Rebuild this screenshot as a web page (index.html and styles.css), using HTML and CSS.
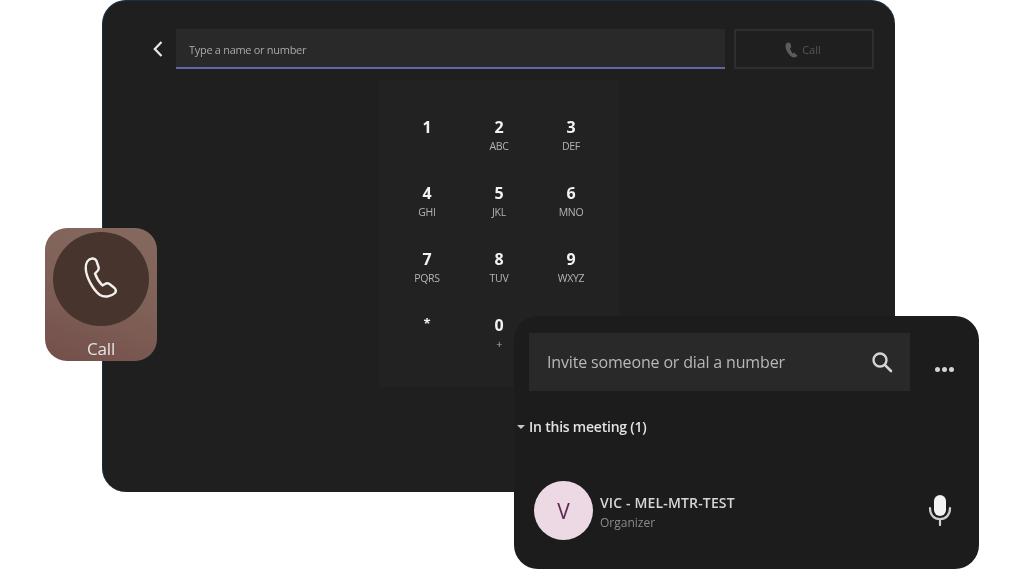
FILE: index.html
```html
<!DOCTYPE html>
<html lang="en">
<head>
    <meta charset="UTF-8">
    <title>Dial pad and participants</title>
    <link rel="stylesheet" href="styles.css">
</head>
<body>
    <div class="dial-window">
        <div class="dial-header">
            <span class="back">
                <svg width="12" height="18" viewBox="0 0 12 18"><path d="M9.500 2 L2.800 9 L9.500 16" fill="none" stroke="#e8e8e8" stroke-width="2.200"/></svg>
            </span>
            <div class="number-input">Type a name or number</div>
            <div class="call-button">
                <svg width="13" height="16" viewBox="0 0 13 16"><path d="M3 .5 C1.200 1 .3 2.500 .5 4.800 C.9 8.500 3.800 13 7 15 C9 15.800 11.500 15.300 12.500 13.800 L9.500 10.800 L7.800 11.500 C6.500 10 5.500 8 5 6.200 L6.400 5 L5.200 1 Z" fill="#5c5c5c"/></svg>
                <span>Call</span>
            </div>
        </div>
        <div class="dial-pad">
            <div class="key"><span class="digit">1</span></div>
            <div class="key"><span class="digit">2</span><span class="letters">ABC</span></div>
            <div class="key"><span class="digit">3</span><span class="letters">DEF</span></div>
            <div class="key"><span class="digit">4</span><span class="letters">GHI</span></div>
            <div class="key"><span class="digit">5</span><span class="letters">JKL</span></div>
            <div class="key"><span class="digit">6</span><span class="letters">MNO</span></div>
            <div class="key"><span class="digit">7</span><span class="letters">PQRS</span></div>
            <div class="key"><span class="digit">8</span><span class="letters">TUV</span></div>
            <div class="key"><span class="digit">9</span><span class="letters">WXYZ</span></div>
            <div class="key"><span class="digit star">*</span></div>
            <div class="key"><span class="digit">0</span><span class="letters">+</span></div>
            <div class="key"></div>
        </div>
    </div>

    <div class="call-tile">
        <div class="call-circle">
            <svg width="33" height="43" viewBox="0 0 33 43"><path d="M8 2.500 C4 3 1.500 7 1.800 13 C2.200 21 9 34 16 39 C20 41.500 27 41 31 37 C32 35.500 32 33.500 30.500 32 L25.500 28 C24 27 22.500 27 21 28 L18.500 29.500 C15 26 12.500 22 11 17.500 L13.500 15 C14.500 14 15 12.500 14.500 11 L12.500 5 C12 3.500 10 2.200 8 2.500 Z" fill="none" stroke="#f4f0ee" stroke-width="2.400" stroke-linejoin="round"/></svg>
        </div>
        <span class="call-label">Call</span>
    </div>

    <div class="people-panel">
        <div class="search-row">
            <div class="search-box">
                <span>Invite someone or dial a number</span>
                <svg width="22" height="22" viewBox="0 0 22 22"><circle cx="9" cy="9" r="6.500" fill="none" stroke="#d4d4d4" stroke-width="2.400"/><path d="M13.800 13.800 L20 20" stroke="#d4d4d4" stroke-width="2.600" stroke-linecap="round"/></svg>
            </div>
            <div class="more"><i></i><i></i><i></i></div>
        </div>
        <div class="section-title"><span class="caret"></span>In this meeting (1)</div>
        <div class="person">
            <div class="avatar">V</div>
            <div class="person-text">
                <div class="person-name">VIC - MEL-MTR-TEST</div>
                <div class="person-role">Organizer</div>
            </div>
            <svg class="mic" width="24" height="32" viewBox="0 0 24 32"><rect x="6" y="1" width="12" height="21" rx="6" fill="#f2f2f2"/><path d="M2 14 C2 21 6 25 12 25 C18 25 22 21 22 14 M12 25 V31" fill="none" stroke="#cfcfcf" stroke-width="2.200" stroke-linecap="round"/></svg>
        </div>
    </div>
</body>
</html>
```

FILE: styles.css
```css
body {
    margin: 0;
    width: 1024px;
    height: 569px;
    overflow: hidden;
    position: relative;
    background-color: #fff;
    font-family: "Open Sans", "Noto Sans", Arial, sans-serif;
}
.dial-window {
    position: absolute;
    left: 102px;
    top: 0;
    width: 793px;
    height: 492px;
    box-sizing: border-box;
    padding-top: 29px;
    display: flex;
    flex-direction: column;
    background-color: #1f1f1f;
    border-radius: 24px;
    border-top: 1px solid #14304a;
    border-left: 1px solid #14304a;
}
.dial-header {
    display: flex;
    height: 40px;
    margin-top: -1px;
    padding: 0 21px 0 40px;
}
.back {
    width: 30px;
    margin-right: 3px;
    display: flex;
    align-items: center;
    justify-content: center;
}
.number-input {
    flex: 1;
    display: flex;
    align-items: center;
    padding: 2px 0 0 13px;
    box-sizing: border-box;
    background-color: #292929;
    border-bottom: 2px solid #6264a7;
    color: #a8a8a8;
    font-size: 11px;
    letter-spacing: -0.3px;
    filter: blur(0.5px);
}
.call-button {
    width: 140px;
    margin-left: 9px;
    padding-top: 1px;
    box-sizing: border-box;
    display: flex;
    align-items: center;
    justify-content: center;
    gap: 4px;
    border: 2px solid #2e2e2e;
    color: #565656;
    font-size: 11px;
    filter: blur(0.5px);
}
.call-button svg {
    margin-left: -2px;
}
.dial-pad {
    align-self: center;
    width: 240px;
    height: 307px;
    margin-top: 11px;
    box-sizing: border-box;
    padding: 37px 12px 0;
    display: grid;
    grid-template-columns: repeat(3, 72px);
    grid-auto-rows: 66px;
    background-color: #222;
    filter: blur(0.4px);
}
.key {
    display: flex;
    flex-direction: column;
    align-items: center;
}
.digit {
    height: 20px;
    line-height: 20px;
    color: #f2f2f2;
    font-size: 16px;
    font-weight: 700;
}
.star {
    font-size: 13px;
    line-height: 16px;
}
.letters {
    margin-top: 2px;
    line-height: 14px;
    color: #b4b4b4;
    font-size: 10.5px;
    letter-spacing: -0.3px;
}
.call-tile {
    position: absolute;
    left: 45px;
    top: 228px;
    width: 112px;
    height: 133px;
    box-sizing: border-box;
    padding-top: 4px;
    display: flex;
    flex-direction: column;
    align-items: center;
    border-radius: 22px;
    background: linear-gradient(20deg, #744f4b 0%, #7f6157 50%, #86695e 100%);
}
.call-circle {
    width: 96px;
    height: 96px;
    display: flex;
    align-items: center;
    justify-content: center;
    border-radius: 50%;
    background-color: #47352d;
}
.call-circle svg {
    margin: -3px 2px 0 0;
}
.call-label {
    margin-top: 11px;
    line-height: 24px;
    color: #e6e3e2;
    font-size: 17px;
    letter-spacing: -0.2px;
    filter: blur(0.3px);
}
.people-panel {
    position: absolute;
    left: 514px;
    top: 316px;
    width: 465px;
    height: 253px;
    box-sizing: border-box;
    padding: 17px 15px 0;
    background-color: #1c1c1c;
    border-radius: 24px;
}
.search-row {
    display: flex;
}
.search-box {
    width: 381px;
    height: 58px;
    box-sizing: border-box;
    padding: 0 17px 0 18px;
    display: flex;
    align-items: center;
    justify-content: space-between;
    background-color: #292929;
    color: #b8b8b8;
    font-size: 16px;
    letter-spacing: -0.16px;
}
.search-box span {
    filter: blur(0.4px);
}
.more {
    display: flex;
    gap: 2px;
    margin: 34px 0 0 25px;
}
.more i {
    width: 5px;
    height: 5px;
    border-radius: 50%;
    background-color: #d4d4d4;
}
.section-title {
    margin-top: 26px;
    height: 20px;
    line-height: 20px;
    position: relative;
    color: #e2e2e2;
    font-size: 14px;
    font-weight: 600;
    letter-spacing: -0.22px;
    filter: blur(0.4px);
}
.caret {
    position: absolute;
    left: -12px;
    top: 8px;
    border-left: 4px solid transparent;
    border-right: 4px solid transparent;
    border-top: 4px solid #c8c8c8;
}
.person {
    display: flex;
    align-items: center;
    margin-top: 44px;
    padding-left: 5px;
}
.avatar {
    width: 59px;
    height: 59px;
    display: flex;
    align-items: center;
    justify-content: center;
    border-radius: 50%;
    background-color: #edd9e3;
    color: #5d2550;
    font-size: 21px;
    filter: blur(0.3px);
}
.person-text {
    margin: 4px 0 0 7px;
    flex: 1;
    filter: blur(0.4px);
}
.person-name {
    line-height: 20px;
    color: #d6d6d6;
    font-size: 14px;
    font-weight: 600;
    letter-spacing: 0.15px;
}
.person-role {
    line-height: 19px;
    color: #8a8a8a;
    font-size: 12px;
}
.mic {
    margin: -1px 12px 0 0;
}
```
